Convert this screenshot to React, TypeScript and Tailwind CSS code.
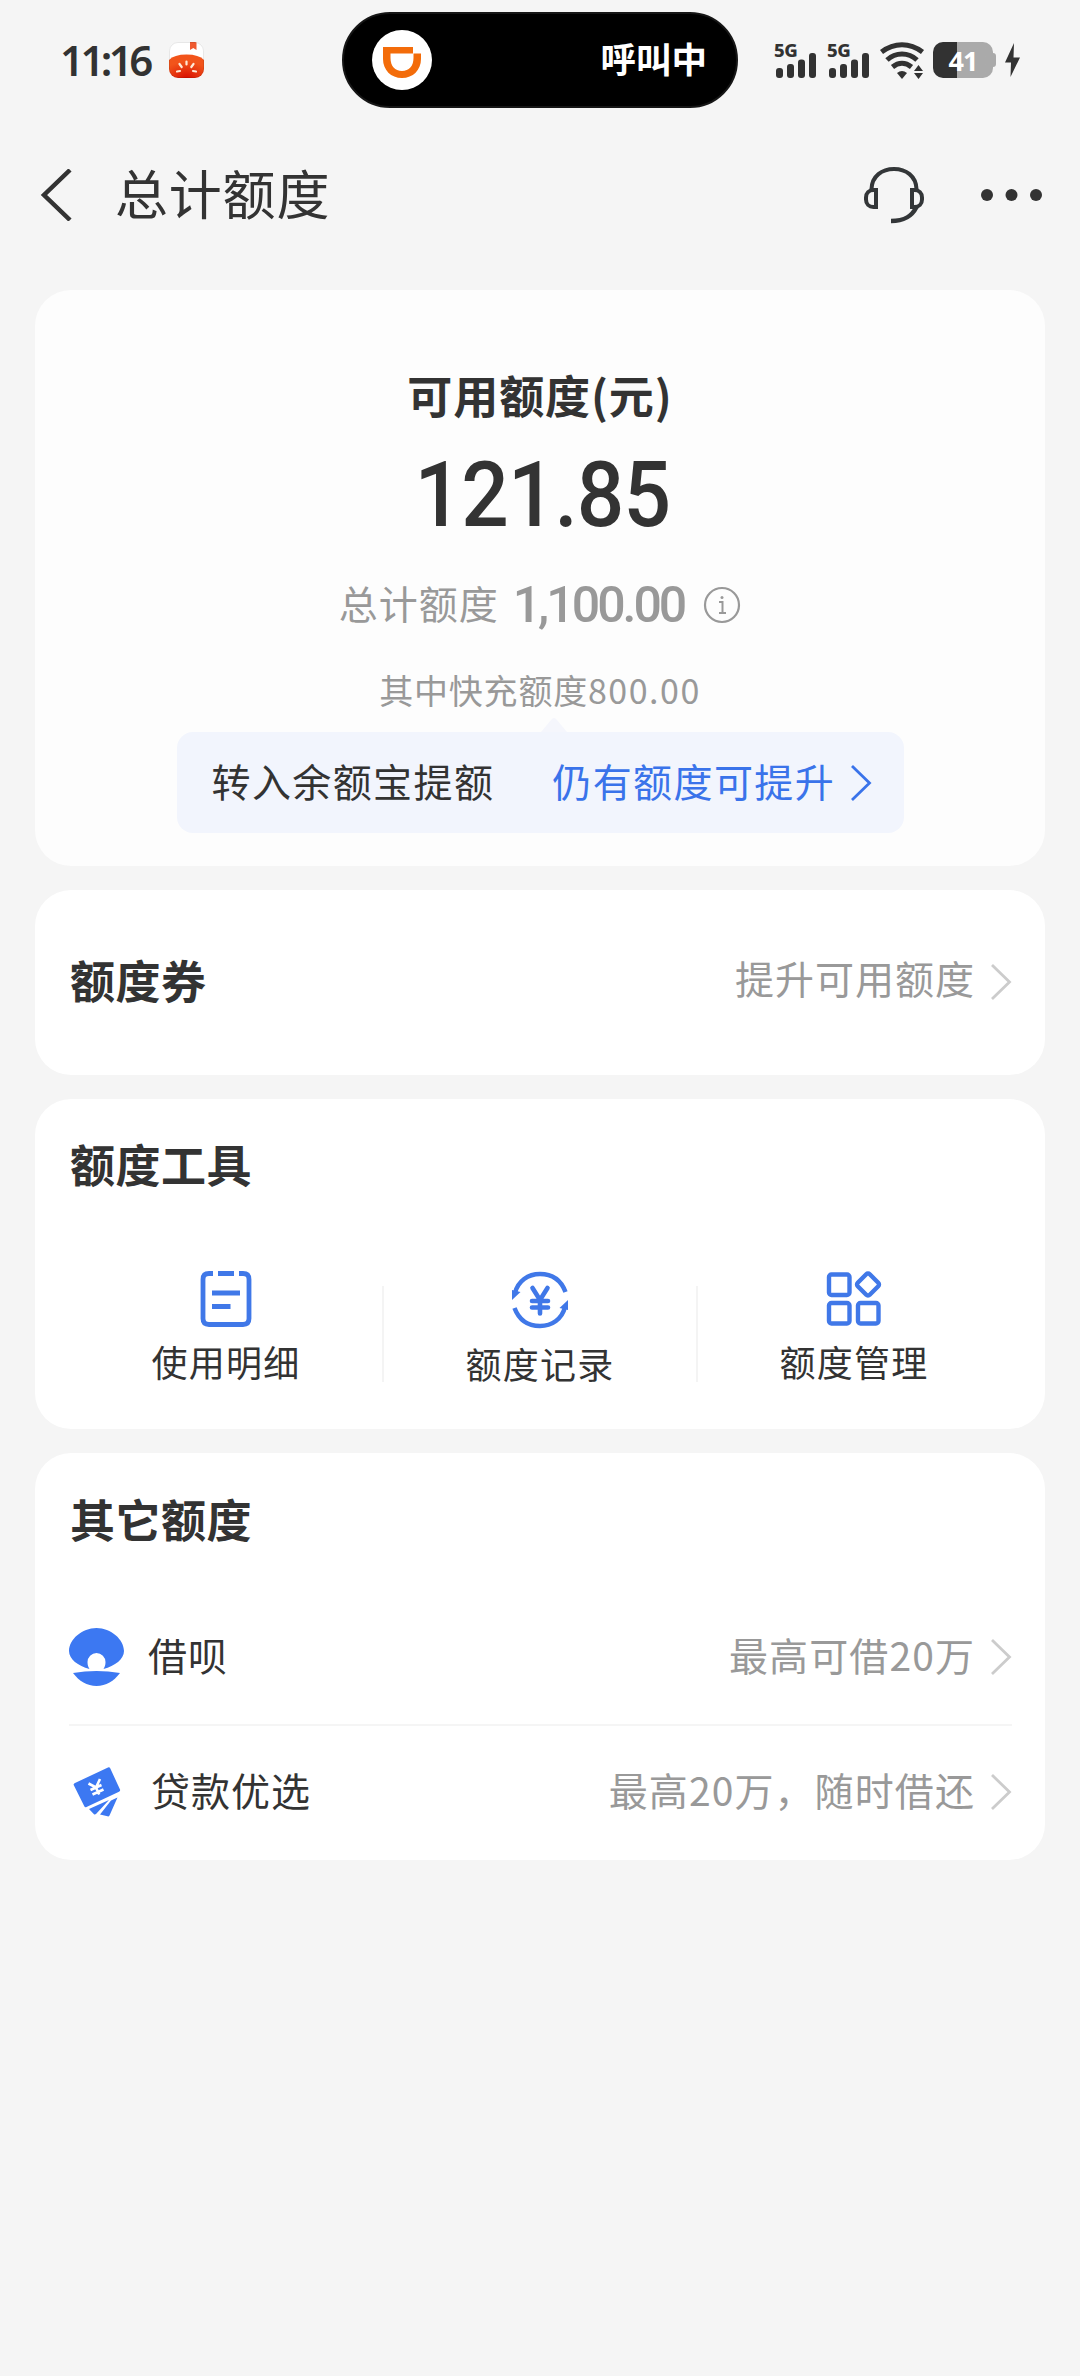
import React from "react"

type Tool = {
  label: string
  icon: React.ReactNode
  labelClass: string
}

type OtherQuota = {
  name: string
  desc: string
  icon: React.ReactNode
  nameClass: string
  rowClass: string
}

const Chevron = ({ color }: { color: string }) => (
  <svg width="22" height="38" viewBox="0 0 22 38" fill="none">
    <path d="M2 2L19.500 19L2 36" stroke={color} strokeWidth="2.800" />
  </svg>
)

const Signal = () => (
  <div className="flex w-[43px] flex-col">
    <span className="h-[11px] font-['Noto_Sans'] text-[18.500px] font-extrabold leading-[15px] tracking-[-0.500px]">
      5G
    </span>
    <svg width="43" height="25" viewBox="0 0 43 25" fill="#323232">
      <rect x="2" y="15" width="7" height="10" rx="3" />
      <rect x="13" y="11" width="7" height="14" rx="3" />
      <rect x="24" y="6.500" width="7" height="18.500" rx="3" />
      <rect x="35" y="0" width="7" height="25" rx="3" />
    </svg>
  </div>
)

const StatusBar = () => (
  <div className="flex h-[120px] items-center pl-[60px] text-[#323232]">
    <span className="w-[109px] font-['Noto_Sans'] text-[42px] font-semibold leading-none tracking-[-3.600px]">
      11:16
    </span>
    <svg width="35" height="36" viewBox="0 0 35 36">
      <defs>
        <clipPath id="tomato">
          <rect width="35" height="36" rx="9" />
        </clipPath>
        <radialGradient id="tomatoFill" cx="0.500" cy="1" r="0.700">
          <stop offset="0" stopColor="#d80f00" />
          <stop offset="1" stopColor="#f2541b" />
        </radialGradient>
      </defs>
      <g clipPath="url(#tomato)">
        <rect width="35" height="36" fill="#fff" />
        <path d="M0 18Q5 12.500 17.500 12.500T35 18V36H0z" fill="url(#tomatoFill)" />
        <path d="M21 0h6.500v8l-3.200-2L21 8z" fill="#ef5a30" />
        <g stroke="#ffe9d6" strokeWidth="2.200" strokeLinecap="round">
          <path d="M17.500 19.500v3M10.500 22l2.200 3M24.500 22l-2.200 3M8 29.500l3-.5M27 29.500l-3-.5" />
        </g>
      </g>
      <rect x="0.500" y="0.500" width="34" height="35" rx="8.500" fill="none" stroke="#00000018" />
    </svg>
    <div className="ml-[138px] flex h-[96px] w-[396px] items-center justify-between rounded-full border-2 border-[#161616] bg-black pl-[28px] pr-[29px]">
      <svg width="60" height="60" viewBox="0 0 60 60">
        <circle cx="30" cy="30" r="30" fill="#fff" />
        <path
          fillRule="evenodd"
          d="M11 17h30v6.500h8V29c0 11-8 19-19 19s-19-8-19-19zM18.500 23.500V28c0 8 4.500 13 11.500 13s11.500-5 11.500-13v-4.500z"
          fill="#f36c0a"
        />
      </svg>
      <span className="pb-[5px] text-[35.500px] font-bold leading-none text-white">呼叫中</span>
    </div>
    <div className="ml-[36px] flex items-center">
      <Signal />
      <div className="ml-[10px]">
        <Signal />
      </div>
      <svg className="ml-[10px]" width="45" height="37" viewBox="0 0 45 37" fill="none">
        <g stroke="#323232" strokeWidth="5">
          <path d="M1.500 10Q11 2.700 22 2.700T42.500 10" />
          <path d="M7 18Q13.500 12 22 12T37 18" />
          <path d="M12.500 25Q17 21.300 22 21.300T31.500 25" />
        </g>
        <path d="M17 31q5-4 10 0l-5 6z" fill="#323232" />
        <path d="M34 29l4.500-6 4.500 6zM34 31l4.500 6 4.500-6z" fill="#323232" />
      </svg>
      <div className="ml-[8px] flex h-[36px] w-[60px] items-center justify-center rounded-[10px] bg-linear-to-r from-[#323232] from-40% to-[#aaaaaa] to-40% font-['Noto_Sans'] text-[27px] font-bold leading-none tracking-[-1px] text-white">
        41
      </div>
      <div className="h-[14px] w-[3px] rounded-r-sm bg-[#aaaaaa]" />
      <svg className="ml-[9px]" width="15" height="34" viewBox="0 0 15 34" fill="#323232">
        <path d="M9 0L0 19.500h6L5.500 34 15 14.500H8.500z" />
      </svg>
    </div>
  </div>
)

const NavBar = () => (
  <div className="flex h-[150px] items-center pl-[40px] pr-[38px] text-[#333333]">
    <svg width="32" height="52" viewBox="0 0 32 52" fill="none">
      <path d="M30 1L4 26l26 25" stroke="#333" strokeWidth="4.500" />
    </svg>
    <h1 className="ml-[43px] pb-[6px] text-[53px] leading-none tracking-[0.800px]">总计额度</h1>
    <svg className="ml-auto" width="60" height="58" viewBox="0 0 60 58" fill="none" stroke="#333638">
      <path d="M7.500 23C8 10 18 3 30 3s22 7 22.500 20" strokeWidth="4" />
      <path d="M12 24v17H9.500C5 41 2 38 2 33.500v-2C2 27 5 24 9.500 24z" strokeWidth="4" />
      <path d="M48 24v17h2.500c4.500 0 7.500-3 7.500-7.500v-2c0-4.500-3-7.500-7.500-7.500z" strokeWidth="4" />
      <path d="M52.500 41C48 50 41 55 27 55" strokeWidth="4.500" />
    </svg>
    <svg className="ml-[57px]" width="61" height="14" viewBox="0 0 61 14" fill="#333">
      <circle cx="6" cy="7" r="6" />
      <circle cx="30.500" cy="7" r="6" />
      <circle cx="55" cy="7" r="6" />
    </svg>
  </div>
)

const DetailIcon = () => (
  <svg width="52" height="56" viewBox="0 0 52 56" fill="none" stroke="#4078e8" strokeWidth="4.800">
    <path d="M13 2.500H9Q3 2.500 3 8.500v39q0 6 6 6h34q6 0 6-6v-39q0-6-6-6h-4M18 2.500h16M12 22h28M12 35.500h18.500" />
  </svg>
)

const RecordIcon = () => (
  <svg width="56" height="58" viewBox="0 0 56 58" fill="none" stroke="#4078e8">
    <path d="M3 22C6 10 16 3 28 3c12 0 21 6 25.500 18" strokeWidth="4.500" />
    <path d="M53 36C50 48 40 55 28 55S7 49 2.500 37" strokeWidth="4.500" />
    <path d="M0 19l8.500 2L0 29zM56 39l-8.500-2L56 29z" fill="#4078e8" stroke="none" />
    <path d="M20.500 17l7.500 12 7.500-12M28 29.500V42.500M20 30h16M20 36.500h16" strokeWidth="4.600" strokeLinecap="round" />
  </svg>
)

const ManageIcon = () => (
  <svg width="56" height="56" viewBox="0 0 56 56" fill="none" stroke="#4078e8" strokeWidth="4.400">
    <rect x="3" y="3.500" width="20.500" height="20.500" rx="2.500" />
    <rect x="3" y="32" width="20.500" height="20.500" rx="2.500" />
    <rect x="32" y="32" width="20.500" height="20.500" rx="2.500" />
    <rect x="33.500" y="5" width="17" height="17" rx="2.500" transform="rotate(45 42 13.500)" />
  </svg>
)

const ShellIcon = () => (
  <svg width="56" height="58" viewBox="0 0 56 58" fill="#3c78f2">
    <path d="M27.500 0C42 0 55 11.500 55 23c0 8-9 15-20.500 18 1.200-2 2-3.500 2-7a9 9 0 0 0-18 0c0 3.500.8 5 2 7C9 38 0 31 0 23 0 11.500 13 0 27.500 0z" />
    <path d="M4 45q23.500-4 47 0c-6 8-14 13-23.500 13S10 53 4 45z" />
  </svg>
)

const LoanIcon = () => (
  <svg width="48" height="50" viewBox="0 0 48 50" fill="#3c78f2">
    <path d="M2 16L35 .5q1.500-.6 2.200.8L47 22.500q.5 1.500-1 2.200L13.500 40q-1.500.7-2.200-.8L.7 18Q.2 16.700 2 16z" />
    <path d="M16 42l20-9-13 14q-1 .8-2 .2zM27 47.500L38 33.500l6.500-3-8 18q-.7 1.200-2 .8z" />
    <g stroke="#fff" strokeWidth="2.600" fill="none">
      <path d="M15.500 16.500l7.500 4 4-8.500M23 20.500l3.200 7M17.500 23l11-5M19.500 27.500l11-5" />
    </g>
  </svg>
)

const tools: Tool[] = [
  { label: "使用明细", icon: <DetailIcon />, labelClass: "mt-[12px]" },
  { label: "额度记录", icon: <RecordIcon />, labelClass: "mt-[12px]" },
  { label: "额度管理", icon: <ManageIcon />, labelClass: "mt-[12px]" },
]

const quotas: OtherQuota[] = [
  {
    name: "借呗",
    desc: "最高可借20万",
    icon: <ShellIcon />,
    nameClass: "ml-[23px]",
    rowClass: "h-[137px]",
  },
  {
    name: "贷款优选",
    desc: "最高20万，随时借还",
    icon: <LoanIcon />,
    nameClass: "ml-[26px]",
    rowClass: "h-[132px]",
  },
]

const App = () => {
  return (
    <div className="h-[2376px] w-[1080px] bg-[#f5f5f5] font-['Noto_Sans_CJK_SC',sans-serif] text-[#333333]">
      <StatusBar />
      <NavBar />
      <main className="flex flex-col gap-[24px] px-[35px] pt-[20px]">
        <section className="flex h-[576px] flex-col items-center rounded-[36px] bg-[#fdfdfd] pt-[78px]">
          <h2 className="text-[45px] font-bold leading-[54px] tracking-[0.900px]">可用额度(元)</h2>
          <div className="ml-[4px] mt-[29px] scale-x-93 font-[Roboto] text-[90px] font-medium leading-[90px] tracking-[-1px]">
            121.85
          </div>
          <div className="mt-[34px] flex h-[60px] items-center text-[#999999]">
            <span className="pb-[5px] text-[39px] leading-none tracking-[1px]">总计额度</span>
            <span className="ml-[14px] font-[Roboto] text-[50px] font-medium leading-none tracking-[-3px]">
              1,100.00
            </span>
            <svg className="ml-[19px]" width="38" height="38" viewBox="0 0 38 38" fill="none" stroke="#999">
              <circle cx="19" cy="19" r="17" strokeWidth="2.200" />
              <path d="M16 16h3.500v11M16 27h7" strokeWidth="2" />
              <circle cx="19" cy="11.500" r="1.500" fill="#999" stroke="none" />
            </svg>
          </div>
          <div className="mt-[32px] text-[34px] leading-[46px] tracking-[0.800px] text-[#999999]">
            其中快充额度<span className="tracking-[1.500px]">800.00</span>
          </div>
          <svg className="ml-[28px] mt-[4px]" width="26" height="15" viewBox="0 0 26 15" fill="#f5f6fc">
            <path d="M0 15L10 3q3-4 6 0l10 12z" />
          </svg>
          <div className="flex h-[101px] w-[727px] items-center rounded-2xl bg-[#f2f5fd] pl-[35px] text-[39px] leading-none tracking-[1.400px]">
            <span className="pb-[5px]">转入余额宝提额</span>
            <span className="ml-[58px] mr-[15px] pb-[5px] text-[#3a73ea]">仍有额度可提升</span>
            <Chevron color="#3a73ea" />
          </div>
        </section>

        <section className="flex h-[185px] items-center rounded-[36px] bg-white pl-[35px] pr-[33px]">
          <h2 className="pb-[6px] text-[45px] font-bold leading-none tracking-[0.500px]">额度券</h2>
          <span className="ml-auto mr-[15px] pb-[11px] text-[39px] leading-none tracking-[1px] text-[#999999]">
            提升可用额度
          </span>
          <div className="pb-[2px]">
            <Chevron color="#cccccc" />
          </div>
        </section>

        <section className="flex h-[330px] flex-col rounded-[36px] bg-white px-[34px] pt-[38px]">
          <h2 className="pl-px text-[45px] font-bold leading-[54px] tracking-[0.500px]">额度工具</h2>
          <div className="mt-[80px] flex">
            {tools.map((tool, index) => (
              <React.Fragment key={tool.label}>
                {index > 0 && <div className="-mx-px mt-[15px] h-[96px] w-[2px] bg-[#f4f4f4]" />}
                <div className="flex flex-1 flex-col items-center">
                  {tool.icon}
                  <span className={`text-[36px] leading-[44px] tracking-[1.200px] ${tool.labelClass}`}>
                    {tool.label}
                  </span>
                </div>
              </React.Fragment>
            ))}
          </div>
        </section>

        <section className="flex h-[407px] flex-col rounded-[36px] bg-white pl-[34px] pr-[33px] pt-[39px]">
          <h2 className="pl-px text-[45px] font-bold leading-[54px] tracking-[0.500px]">其它额度</h2>
          <div className="mt-[43px] divide-y-2 divide-[#f5f5f5]">
            {quotas.map((quota) => (
              <div key={quota.name} className={`flex items-center ${quota.rowClass}`}>
                <div className="flex w-[56px] justify-center">{quota.icon}</div>
                <span className={`pb-[5px] text-[39px] leading-none tracking-[1px] ${quota.nameClass}`}>
                  {quota.name}
                </span>
                <span className="ml-auto mr-[15px] pb-[5px] text-[39px] leading-none tracking-[1.100px] text-[#999999]">
                  {quota.desc}
                </span>
                <Chevron color="#cccccc" />
              </div>
            ))}
          </div>
        </section>
      </main>
    </div>
  )
}

export default App
